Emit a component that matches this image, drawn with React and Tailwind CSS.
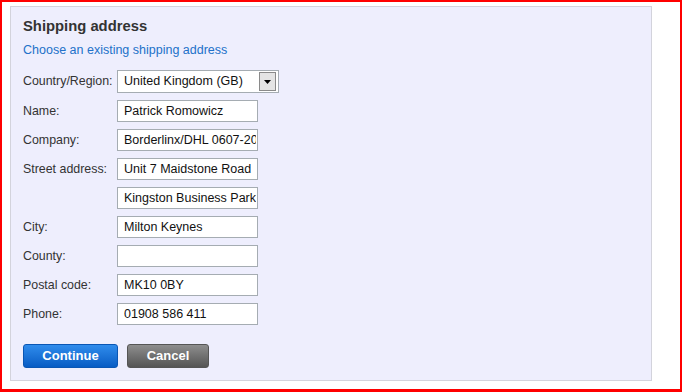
const fields = [
  { label: "Name:", value: "Patrick Romowicz" },
  { label: "Company:", value: "Borderlinx/DHL 0607-2051" },
  { label: "Street address:", value: "Unit 7 Maidstone Road" },
  { label: "", value: "Kingston Business Park" },
  { label: "City:", value: "Milton Keynes" },
  { label: "County:", value: "" },
  { label: "Postal code:", value: "MK10 0BY" },
  { label: "Phone:", value: "01908 586 411" },
];

const Row = ({ label, children }) => (
  <div className="flex items-center">
    <div className="w-[94px] shrink-0 text-[12.4px] leading-none text-[#333]">{label}</div>
    {children}
  </div>
);

export default function App() {
  return (
    <div
      className="h-[392px] w-[682px] border-2 border-b-[3px] border-[#ff0000] bg-white pl-[8px] pt-[4px]"
      style={{ fontFamily: '"Liberation Sans", Arial, sans-serif' }}
    >
      <div className="flex h-[375px] w-[642px] flex-col border border-[#d3d3dc] bg-[#eeeefd] pl-[12px] pt-[10px]">
        <h2 className="text-[14.8px] font-bold leading-[18px] text-[#333]">Shipping address</h2>
        <a href="#" className="mt-[7px] text-[12.5px] leading-[16px] text-[#2271c9]">
          Choose an existing shipping address
        </a>

        <div className="mt-[12px] flex flex-col gap-[7px]">
          <Row label="Country/Region:">
            <div className="flex h-[23px] w-[162px] items-center justify-between border border-[#a5acb2] bg-white pl-[6px] pr-[2px] text-[12.5px] text-[#111]">
              <span>United Kingdom (GB)</span>
              <span className="flex h-[19px] w-[17px] items-center justify-center border border-[#8a8a8a] bg-[#e4e4e4]">
                <svg width="7" height="4" viewBox="0 0 7 4">
                  <path d="M0 0h7L3.5 4z" fill="#000" />
                </svg>
              </span>
            </div>
          </Row>
          {fields.map((f, i) => (
            <Row key={i} label={f.label}>
              <input
                type="text"
                readOnly
                value={f.value}
                className="h-[22px] w-[141px] border border-[#a5acb2] bg-white pl-[6px] pr-[1px] text-[12.5px] text-[#111] outline-none"
              />
            </Row>
          ))}
        </div>

        <div className="mt-[19px] flex gap-[9px]">
          <button className="h-[24px] w-[95px] rounded-[3px] border border-[#0a56b4] bg-gradient-to-b from-[#2f8cec] to-[#075cc4] text-[13px] font-bold text-white">
            Continue
          </button>
          <button className="h-[24px] w-[82px] rounded-[3px] border border-[#555] bg-gradient-to-b from-[#8e8e8e] to-[#555] text-[13px] font-bold text-white">
            Cancel
          </button>
        </div>
      </div>
    </div>
  );
}
